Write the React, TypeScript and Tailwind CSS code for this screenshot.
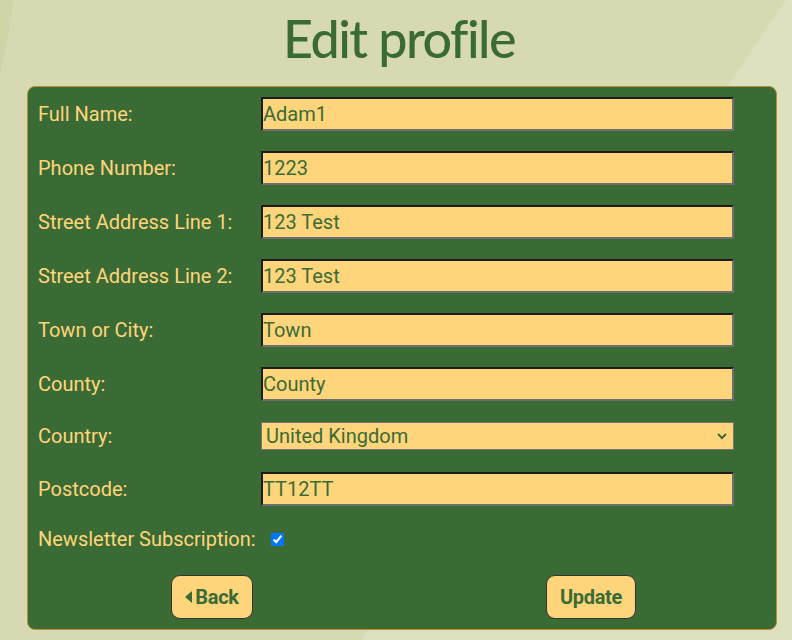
import React from 'react';

const fields = [
  { label: 'Full Name:', value: 'Adam1' },
  { label: 'Phone Number:', value: '1223' },
  { label: 'Street Address Line 1:', value: '123 Test' },
  { label: 'Street Address Line 2:', value: '123 Test' },
  { label: 'Town or City:', value: 'Town' },
  { label: 'County:', value: 'County' },
];

function TextRow({ label, value }: { label: string; value: string }) {
  return (
    <div className="grid grid-cols-[223px_473px] items-center">
      <label className="text-[20px] leading-[24px] text-[#ffd57b]">{label}</label>
      <input
        defaultValue={value}
        className="h-[34px] w-full border-2 border-t-[#1c1c1c] border-l-[#1c1c1c] border-r-[#6e6e6e] border-b-[#6e6e6e] bg-[#ffd57b] px-0 text-[20px] text-[#3a6b35] outline-none"
      />
    </div>
  );
}

export default function App() {
  return (
    <div className="relative min-h-screen w-full overflow-hidden bg-[#d7d9b3] font-['Roboto',sans-serif]">
      {/* background shapes */}
      <svg className="absolute inset-0 h-full w-full" viewBox="0 0 792 640" preserveAspectRatio="none">
        <path d="M0 0 L14 0 Q8 40 0 75 Z" fill="#d0d4a9" />
        <path d="M792 0 L786 0 Q560 330 362 640 L792 640 Z" fill="#dee1c0" />
      </svg>

      <div className="relative flex flex-col items-center">
        <h1 className="ml-[6px] mt-[6px] h-[80px] text-[52px] font-medium leading-[64px] tracking-[-1.5px] text-[#3a6b35] font-['Lato',sans-serif]">
          Edit profile
        </h1>

        <form className="ml-[27px] mr-[15px] self-stretch rounded-[8px] border border-[#b8902f] bg-[#3a6b35] pb-[10px] pl-[10px] pt-[10px]">
          <div className="flex flex-col gap-[20px]">
            {fields.map((f) => (
              <TextRow key={f.label} label={f.label} value={f.value} />
            ))}
          </div>

          <div className="mt-[21px] grid grid-cols-[223px_473px] items-center">
            <label className="text-[20px] leading-[24px] text-[#ffd57b]">Country:</label>
            <div className="relative">
              <select
                defaultValue="GB"
                className="h-[28px] w-full appearance-none border border-[#767676] bg-[#ffd57b] pl-[4px] text-[20px] leading-[24px] text-[#3a6b35] outline-none"
              >
                <option value="GB">United Kingdom</option>
              </select>
              <svg className="pointer-events-none absolute right-[7px] top-[11px]" width="10" height="7" viewBox="0 0 10 7">
                <path d="M1 1 L5 5 L9 1" fill="none" stroke="#3a6b35" strokeWidth="2" />
              </svg>
            </div>
          </div>

          <div className="mt-[22px]">
            <TextRow label="Postcode:" value="TT12TT" />
          </div>

          <div className="mt-[21px] flex h-[24px] items-center">
            <label className="text-[20px] leading-[24px] text-[#ffd57b]">Newsletter Subscription:</label>
            <input type="checkbox" defaultChecked className="ml-[15px] h-[13px] w-[13px]" />
          </div>

          <div className="mt-[24px] flex gap-[293px] pl-[133px]">
            <button type="button" className="flex h-[44px] w-[82px] items-center justify-center rounded-[9px] border border-[#333] bg-[#ffd57b] text-[20px] font-bold tracking-[-0.3px] text-[#3a6b35]">
              <svg width="7" height="12" viewBox="0 0 7 12" className="mr-[3px]">
                <path d="M7 0 L0 6 L7 12 Z" fill="#3a6b35" />
              </svg>
              Back
            </button>
            <button type="button" className="h-[44px] w-[90px] rounded-[9px] border border-[#333] bg-[#ffd57b] text-[20px] font-bold tracking-[-0.3px] text-[#3a6b35]">
              Update
            </button>
          </div>
        </form>
      </div>
    </div>
  );
}
